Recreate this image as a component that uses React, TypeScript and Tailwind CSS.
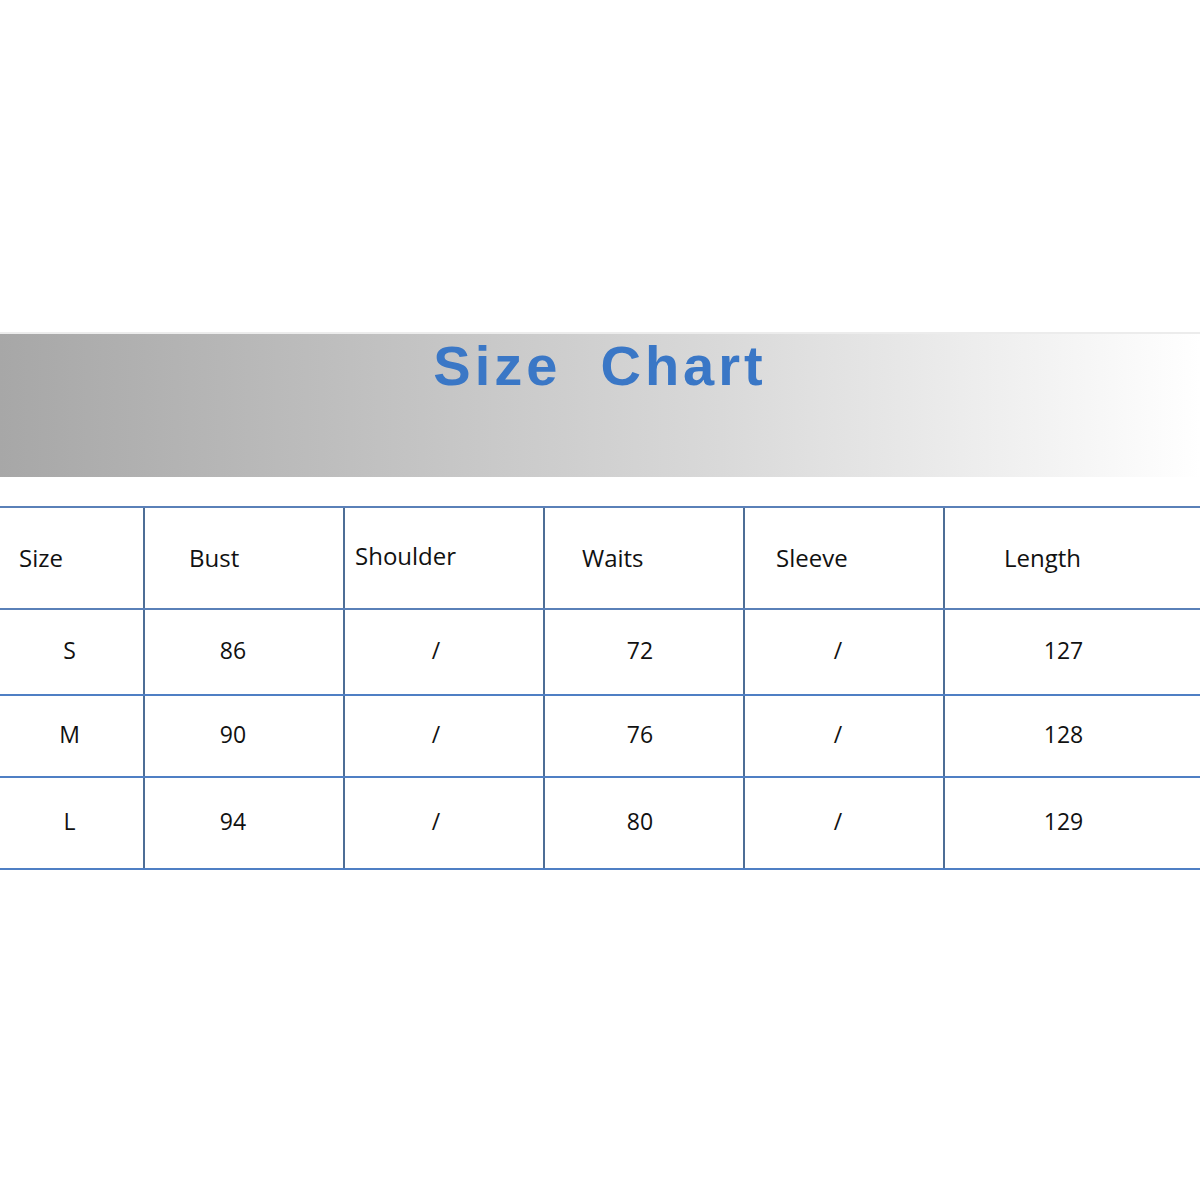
import React from 'react';

const headers = [
  { label: 'Size', className: 'pl-[19px]' },
  { label: 'Bust', className: 'pl-[44px]' },
  { label: 'Shoulder', className: 'pl-[10px] pb-[5px]' },
  { label: 'Waits', className: 'pl-[37px]' },
  { label: 'Sleeve', className: 'pl-[31px]' },
  { label: 'Length', className: 'pl-[59px]' },
];

// per column nudge so values sit where the chart has them
const colShift = ['pr-[4px]', 'pr-[22px]', 'pr-[16px]', 'pr-[8px]', 'pr-[12px]', 'pr-[18px]'];

const rows = [
  { height: 'h-[86px]', values: ['S', '86', '/', '72', '/', '127'] },
  { height: 'h-[82px]', values: ['M', '90', '/', '76', '/', '128'] },
  { height: 'h-[92px]', values: ['L', '94', '/', '80', '/', '129'] },
];

const gridCols = 'grid grid-cols-[143px_200px_200px_200px_200px_1fr]';

const App: React.FC = () => {
  return (
    <div className="w-[1200px] h-[1200px] bg-white overflow-hidden font-['Open_Sans',sans-serif] text-[#111]">
      <div className="h-[332px]" />
      <div className="h-[2px] bg-[#ececec]" />
      <div className="h-[143px] bg-gradient-to-r from-[#a7a7a7] via-[#d9d9d9] via-60% to-white flex justify-center">
        <h1 className="pt-[4px] font-['Liberation_Sans',Arial,sans-serif] font-black text-[56px] leading-none tracking-[4px] text-[#3a77c6] whitespace-pre">
          Size  Chart
        </h1>
      </div>
      <div className="h-[29px]" />

      <div className="border-t-2 border-[#5a80b8]">
        <div className={`${gridCols} h-[102px] border-b-2 border-[#5a80b8]`}>
          {headers.map((h, i) => (
            <div
              key={h.label}
              className={`flex items-center text-[24px] ${i > 0 ? 'border-l-2 border-[#4e6e96]' : ''} ${h.className}`}
            >
              {h.label}
            </div>
          ))}
        </div>
        {rows.map((row) => (
          <div key={row.values[0]} className={`${gridCols} ${row.height} border-b-2 border-[#4f7fc4]`}>
            {row.values.map((v, i) => (
              <div
                key={i}
                className={`flex items-center justify-center text-[23px] pb-[3px] ${i > 0 ? 'border-l-2 border-[#4e6e96]' : ''} ${colShift[i]}`}
              >
                {v}
              </div>
            ))}
          </div>
        ))}
      </div>
    </div>
  );
};

export default App;
